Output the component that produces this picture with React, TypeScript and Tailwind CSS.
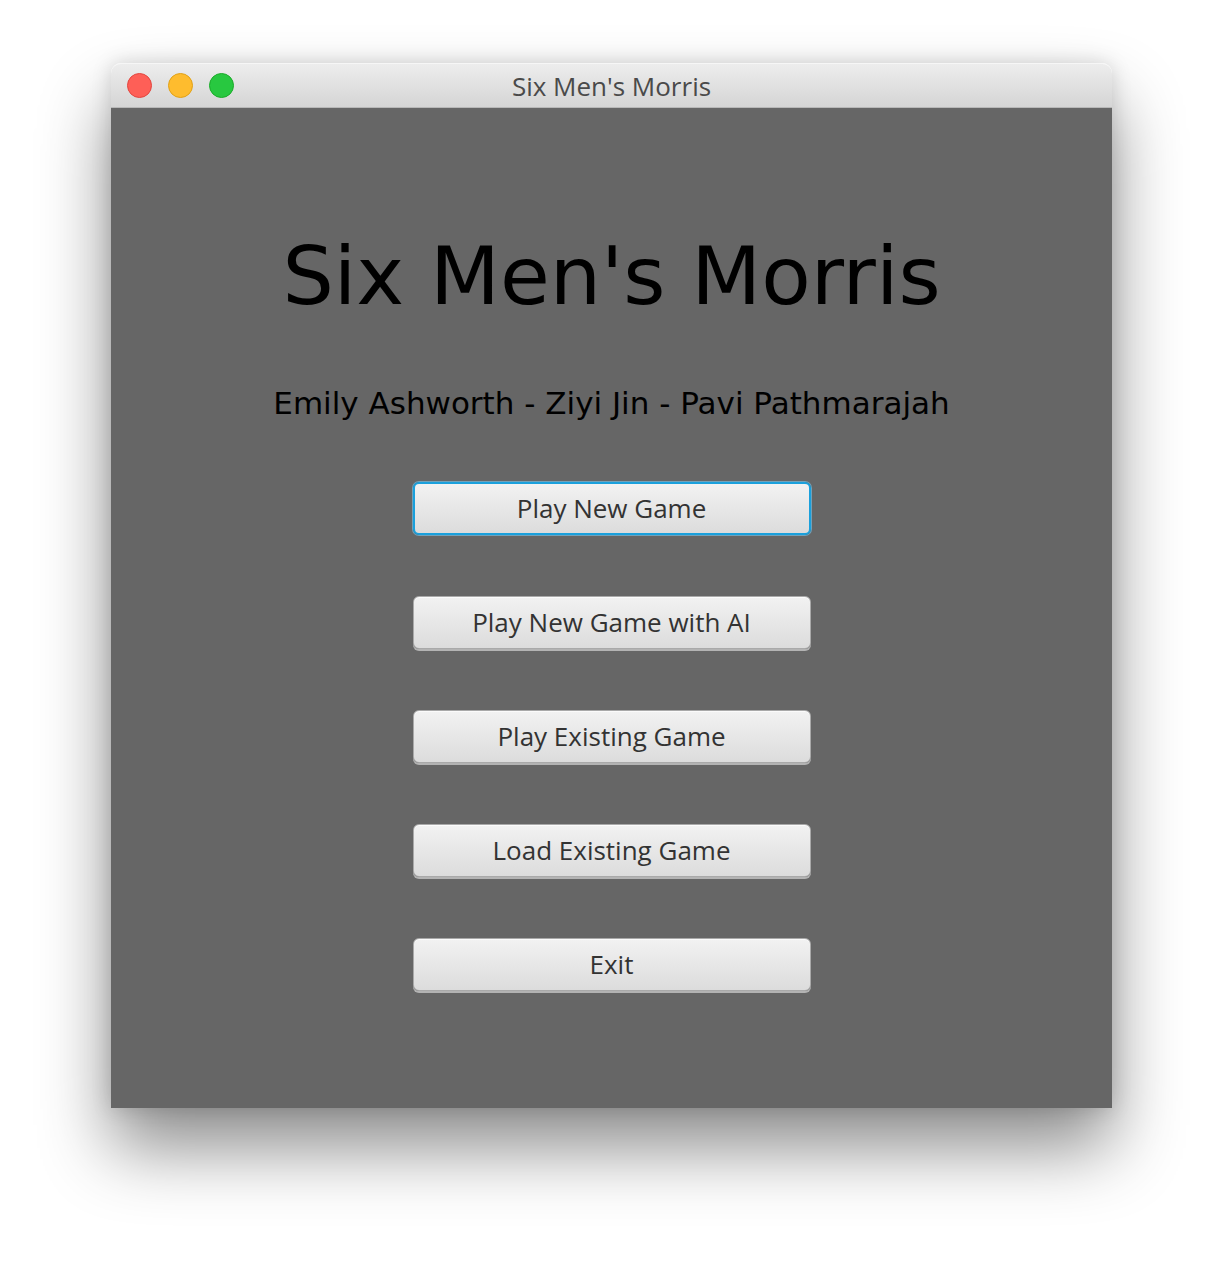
import React from "react";

const btnBase =
  "w-[398px] h-[53px] rounded-[6px] flex items-center justify-center text-[26px] text-[#333333] bg-gradient-to-b from-[#f2f2f2] to-[#dcdcdc]";

function Btn({ label, focused }: { label: string; focused?: boolean }) {
  return (
    <div
      className={
        btnBase +
        (focused
          ? " border-2 border-[#1aa0dc] shadow-[0_0_0_1px_rgba(120,200,240,0.6)]"
          : " border border-[#a9a9a9] shadow-[inset_0_1px_0_#fbfbfb,0_2px_0_#b3b3b3]")
      }
      style={{ fontFamily: '"Open Sans", "Noto Sans", sans-serif' }}
    >
      {label}
    </div>
  );
}

export default function App() {
  return (
    <div className="w-[1224px] h-[1268px] bg-white pt-[63px] pl-[111px]">
      <div className="w-[1001px] flex flex-col shadow-[0_40px_70px_rgba(0,0,0,0.45),0_0_20px_rgba(0,0,0,0.15)] rounded-t-[10px]">
        <div className="h-[45px] rounded-t-[10px] bg-gradient-to-b from-[#ededed] to-[#d5d5d5] border-b border-[#b8b8b8] border-t border-t-[#f6f6f6] flex items-center relative">
          <div className="flex gap-[16px] pl-[16px]">
            <div className="w-[25px] h-[25px] rounded-full bg-[#fe5f57] border border-[#e2463f]" />
            <div className="w-[25px] h-[25px] rounded-full bg-[#febc2e] border border-[#e1a116]" />
            <div className="w-[25px] h-[25px] rounded-full bg-[#28c840] border border-[#1aab29]" />
          </div>
          <div
            className="absolute inset-0 pt-[2px] flex items-center justify-center text-[26px] text-[#4a4a4a]"
            style={{ fontFamily: '"Open Sans", "Noto Sans", sans-serif' }}
          >
            Six Men's Morris
          </div>
        </div>
        <div className="h-[1000px] bg-[#666666] flex flex-col items-center">
          <div
            className="mt-[118px] text-[81px] leading-[100px] text-black"
            style={{ fontFamily: '"DejaVu Sans", sans-serif' }}
          >
            Six Men's Morris
          </div>
          <div
            className="mt-[57px] text-[31px] leading-[40px] text-black"
            style={{ fontFamily: '"DejaVu Sans", sans-serif' }}
          >
            Emily Ashworth - Ziyi Jin - Pavi Pathmarajah
          </div>
          <div className="mt-[59px] flex flex-col gap-[61px]">
            <Btn label="Play New Game" focused />
            <Btn label="Play New Game with AI" />
            <Btn label="Play Existing Game" />
            <Btn label="Load Existing Game" />
            <Btn label="Exit" />
          </div>
        </div>
      </div>
    </div>
  );
}
